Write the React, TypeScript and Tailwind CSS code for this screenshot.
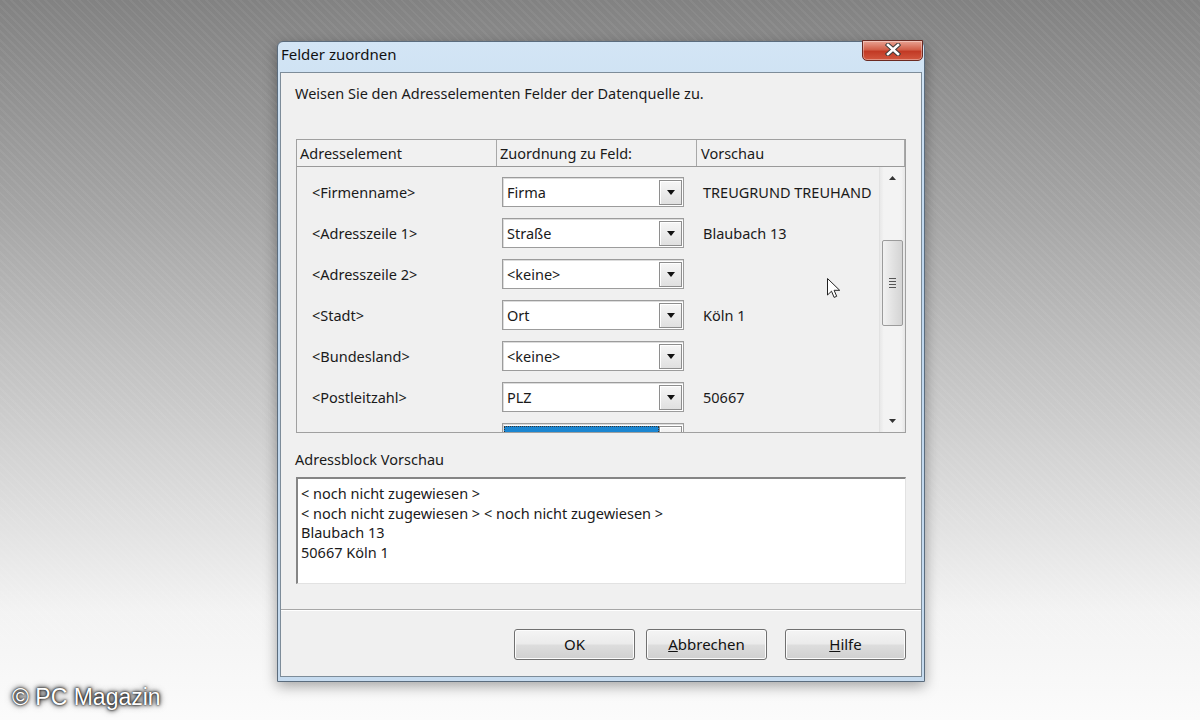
import React from "react";

const rows = [
  { label: "<Firmenname>", field: "Firma", preview: "TREUGRUND TREUHAND" },
  { label: "<Adresszeile 1>", field: "Straße", preview: "Blaubach 13" },
  { label: "<Adresszeile 2>", field: "<keine>", preview: "" },
  { label: "<Stadt>", field: "Ort", preview: "Köln 1" },
  { label: "<Bundesland>", field: "<keine>", preview: "" },
  { label: "<Postleitzahl>", field: "PLZ", preview: "50667" },
  { label: "<Land>", field: "", preview: "", selected: true },
];

const preview = [
  "< noch nicht zugewiesen >",
  "< noch nicht zugewiesen > < noch nicht zugewiesen >",
  "Blaubach 13",
  "50667 Köln 1",
];

function DownArrow() {
  return (
    <svg viewBox="0 0 8 5" className="w-[8px] h-[5px]" aria-hidden="true">
      <path d="M0 0h8L4 5z" fill="#111" />
    </svg>
  );
}

function Combo({ value, selected }: { value: string; selected?: boolean }) {
  return (
    <div className="w-[182px] h-[30px] flex items-center bg-white border border-[#9c9c9c] shadow-[inset_1px_1px_0_#dcdcdc]">
      {selected ? (
        <div className="ml-[1px] mt-[2px] self-start w-[156px] h-[24px] bg-[#1b86d1] border border-dotted border-[#333]" />
      ) : (
        <span className="flex-1 pl-[4px] leading-[28px]">{value}</span>
      )}
      <div className="ml-auto mr-[1px] w-[23px] h-[25px] flex items-center justify-center border border-[#8e8e8e] bg-[linear-gradient(to_bottom,#f6f6f6,#e0e0e0)] shadow-[inset_1px_1px_0_#fff]">
        <DownArrow />
      </div>
    </div>
  );
}

function Button({ children }: { children: React.ReactNode }) {
  return (
    <button
      type="button"
      className="w-[121px] h-[31px] rounded-[3px] border border-[#707070] bg-[linear-gradient(to_bottom,#f4f4f4,#ebebeb_48%,#dddddd_52%,#d0d0d0)] shadow-[inset_0_0_0_1px_#fcfcfc] text-[15px] text-[#111]"
    >
      {children}
    </button>
  );
}

function Cursor() {
  return (
    <svg viewBox="0 0 13 21" className="absolute left-[827px] top-[278px] w-[13px] h-[21px]" aria-hidden="true">
      <path
        d="M0.5 0.5v16.5l4-3.8 2.6 6.2 2.6-1.1-2.6-6h5.6z"
        fill="#fff"
        stroke="#222"
        strokeWidth="1"
        strokeLinejoin="round"
      />
    </svg>
  );
}

export default function App() {
  return (
    <div className="relative w-[1200px] h-[720px] overflow-hidden bg-[repeating-linear-gradient(45deg,rgba(255,255,255,0.05)_0px,rgba(255,255,255,0.05)_2px,transparent_2px,transparent_6px),linear-gradient(to_bottom,#828282,#a6a6a6_30%,#d6d6d6_65%,#f3f3f3_85%,#fbfbfb)] font-['Noto_Sans',sans-serif] text-[14.5px] text-[#1a1a1a]">
      <div className="ml-[277px] mt-[41px] w-[648px] h-[641px] flex flex-col border border-[#5b6c7d] rounded-t-[6px] bg-[linear-gradient(to_bottom,#d3e5f5,#bdd5ec_35%,#c6dbef)] shadow-[0_4px_14px_rgba(0,0,0,0.35)]">
        <div className="h-[30px] flex items-start pl-[3px] pr-[1px]">
          <span className="mt-[1px] text-[15px] text-[#111]">Felder zuordnen</span>
          <div className="ml-auto -mt-[2px] w-[61px] h-[21px] flex items-start justify-center pt-[2px] rounded-b-[5px] border border-[#6b2a22] bg-[linear-gradient(to_bottom,#e9a393,#d2604a_45%,#c23a25_55%,#d2573f)] shadow-[inset_0_0_0_1px_rgba(255,255,255,0.35)]">
            <svg viewBox="0 0 16 13" className="w-[16px] h-[13px]" aria-hidden="true">
              <path d="M3 2l10 9M13 2L3 11" stroke="#3a3a3a" strokeWidth="4.5" strokeLinecap="square" />
              <path d="M3 2l10 9M13 2L3 11" stroke="#fff" strokeWidth="2.6" strokeLinecap="square" />
            </svg>
          </div>
        </div>

        <div className="mx-[2px] mb-[4px] flex-1 flex flex-col border border-[#7d8c99] bg-[#f0f0f0]">
          <p className="mt-[10px] ml-[14px] leading-[20px]">Weisen Sie den Adresselementen Felder der Datenquelle zu.</p>

          <div className="mt-[36px] mx-[15px] h-[294px] flex flex-col border border-[#a0a0a0]">
            <div className="h-[27px] flex border-b border-[#9a9a9a] bg-[#f1f1f1]">
              <div className="w-[200px] pl-[3px] leading-[26px] border-r border-[#a8a8a8]">Adresselement</div>
              <div className="w-[200px] pl-[3px] leading-[26px] border-r border-[#a8a8a8]">Zuordnung zu Feld:</div>
              <div className="flex-1 pl-[4px] leading-[26px] border-r border-[#a8a8a8]">Vorschau</div>
            </div>
            <div className="flex-1 flex min-h-0">
              <div className="flex-1 overflow-hidden pt-[10px]">
                {rows.map((r) => (
                  <div key={r.label} className="h-[41px] flex items-start">
                    <div className="w-[201px] pl-[15px] leading-[30px]">{r.label}</div>
                    <div className="w-[200px] pl-[4px]">
                      <Combo value={r.field} selected={r.selected} />
                    </div>
                    <div className="flex-1 pl-[5px] leading-[30px] whitespace-nowrap overflow-hidden">{r.preview}</div>
                  </div>
                ))}
              </div>
              <div className="w-[26px] flex flex-col border-l border-[#e2e2e2] bg-[linear-gradient(to_right,#e8e8e8,#f3f3f3_15%,#f3f3f3_85%,#e6e6e6)]">
                <div className="h-[22px] flex items-center justify-center">
                  <svg viewBox="0 0 7 4" className="w-[7px] h-[4px]" aria-hidden="true">
                    <path d="M0 4h7L3.5 0z" fill="#333" />
                  </svg>
                </div>
                <div className="flex-1">
                  <div className="mt-[51px] mx-[2px] h-[86px] rounded-[2px] border border-[#9b9b9b] bg-[linear-gradient(to_right,#f2f2f2,#e2e2e2_50%,#d4d4d4)] flex flex-col items-center justify-center gap-[2px]">
                    <div className="w-[7px] h-px bg-[#555]" />
                    <div className="w-[7px] h-px bg-[#555]" />
                    <div className="w-[7px] h-px bg-[#555]" />
                    <div className="w-[7px] h-px bg-[#555]" />
                  </div>
                </div>
                <div className="h-[22px] flex items-center justify-center">
                  <svg viewBox="0 0 7 4" className="w-[7px] h-[4px]" aria-hidden="true">
                    <path d="M0 0h7L3.5 4z" fill="#333" />
                  </svg>
                </div>
              </div>
            </div>
          </div>

          <p className="mt-[16px] ml-[14px] leading-[20px]">Adressblock Vorschau</p>

          <div className="mt-[8px] mx-[15px] h-[107px] bg-white border-t-2 border-l-2 border-t-[#858585] border-l-[#858585] border-b border-r border-b-[#e2e2e2] border-r-[#e2e2e2] pt-[5px] pl-[3px] leading-[19.5px]">
            {preview.map((l) => (
              <div key={l}>{l}</div>
            ))}
          </div>

          <div className="mt-[25px] border-t border-[#a7a7a7] shadow-[0_1px_0_#fff]" />

          <div className="mt-[19px] mr-[15px] flex justify-end gap-[11px]">
            <Button>OK</Button>
            <Button>
              <span className="underline">A</span>bbrechen
            </Button>
            <div className="ml-[7px]">
              <Button>
                <span className="underline">H</span>ilfe
              </Button>
            </div>
          </div>
        </div>
      </div>

      <Cursor />

      <div className="absolute left-[12px] top-[683px] font-['Liberation_Sans',sans-serif] text-[23px] leading-[28px] text-white [text-shadow:0_0_2px_#000,0_0_4px_#000,0_0_7px_rgba(0,0,0,0.7)]">
        © PC Magazin
      </div>
    </div>
  );
}
